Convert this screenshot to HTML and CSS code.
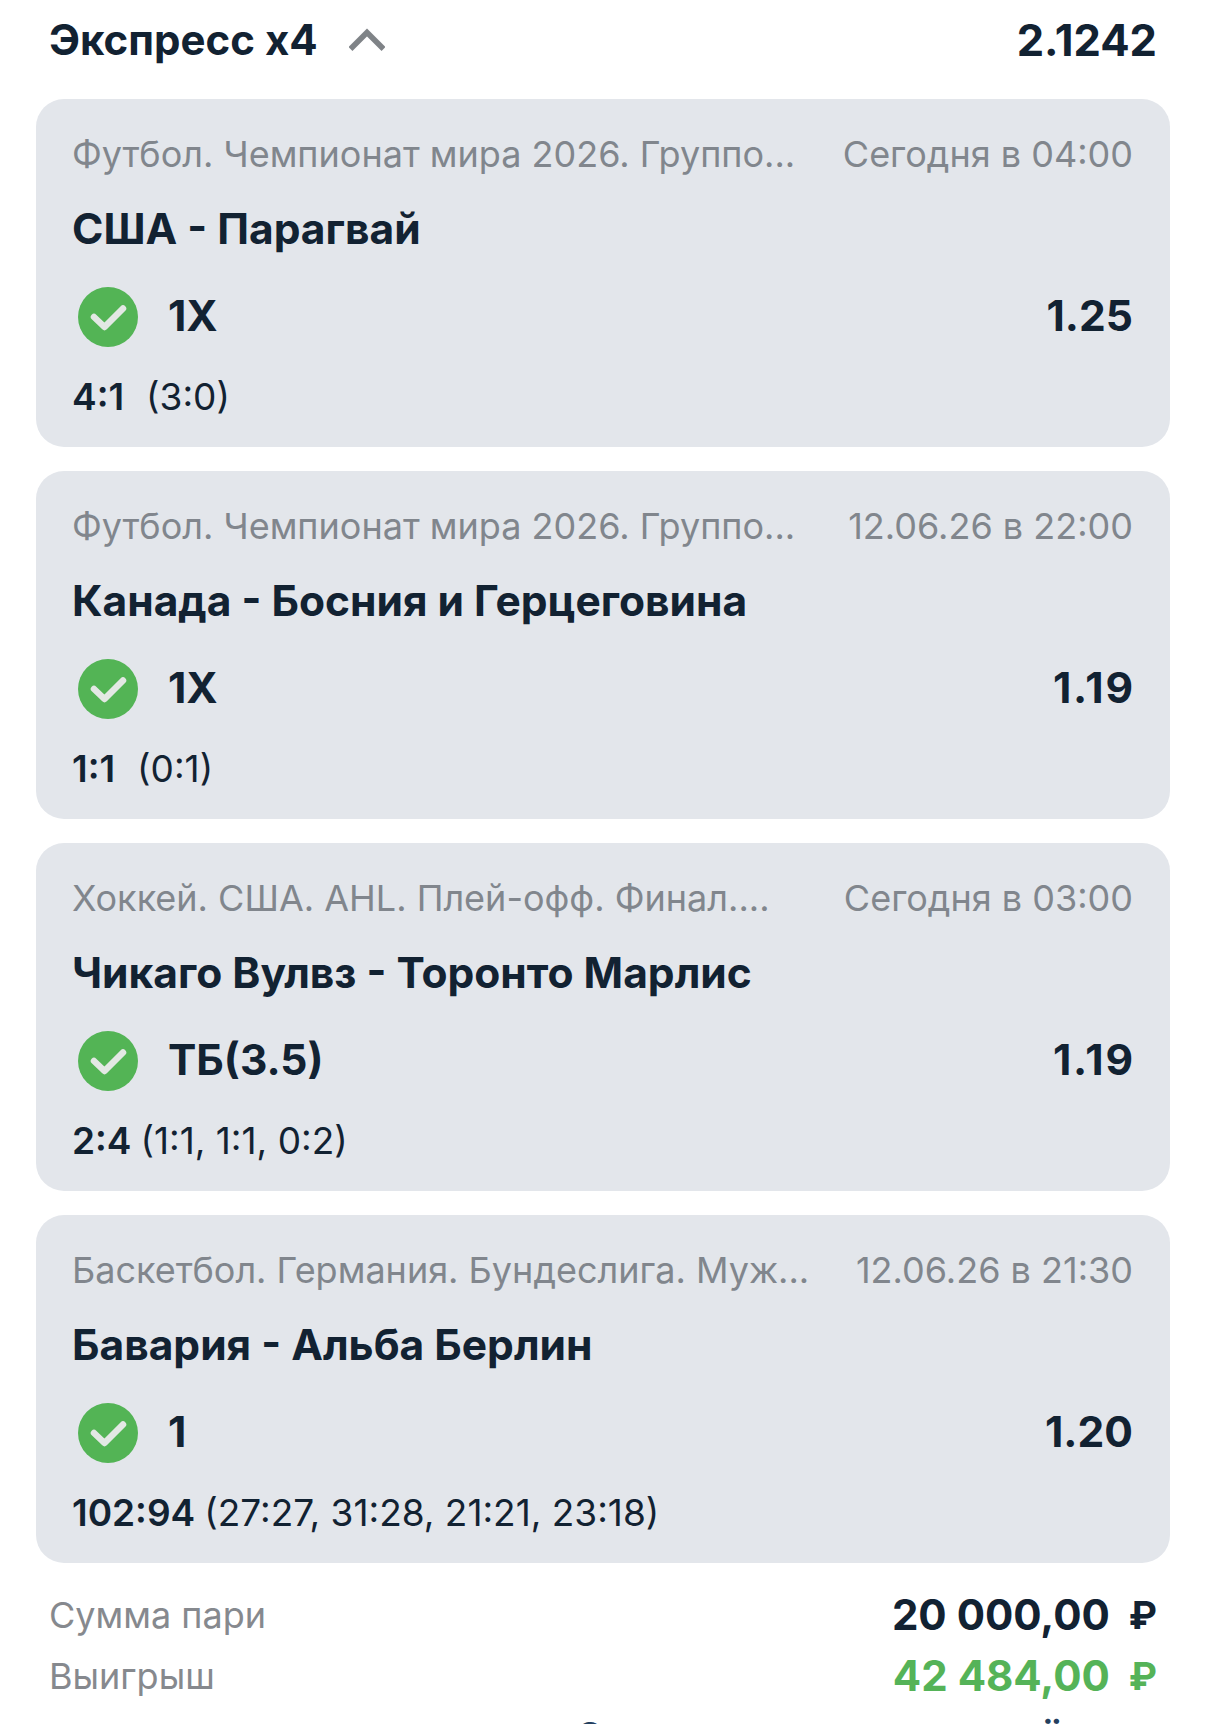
FILE: index.html
```html
<!DOCTYPE html>
<html lang="ru">
<head>
<meta charset="utf-8">
<title>Экспресс x4</title>
<link rel="stylesheet" href="styles.css">
</head>
<body>
<main class="page">
  <header class="head">
    <div class="head-left">
      <span class="head-title">Экспресс x4</span>
      <svg class="chev" viewBox="0 0 36 24" width="36" height="24"><path d="M1.5 21 L18 4.5 L34.5 21" fill="none" stroke="#7f8387" stroke-width="5.5"/></svg>
    </div>
    <span class="head-odd">2.1242</span>
  </header>

  <section class="card">
    <div class="meta"><span class="league">Футбол. Чемпионат мира 2026. Группо...</span><span>Сегодня в 04:00</span></div>
    <div class="teams">США - Парагвай</div>
    <div class="pick">
      <svg class="ok" viewBox="0 0 60 60" width="60" height="60"><circle cx="30" cy="30" r="30" fill="#53b455"/><path d="M16 30 L26.5 40 L45 21.5" fill="none" stroke="#e3e8e4" stroke-width="6.5" stroke-linecap="round" stroke-linejoin="round"/></svg>
      <span class="pick-name">1X</span><span class="odd">1.25</span>
    </div>
    <div class="score"><b>4:1</b><span class="s-gap">(3:0)</span></div>
  </section>

  <section class="card">
    <div class="meta"><span class="league">Футбол. Чемпионат мира 2026. Группо...</span><span>12.06.26 в 22:00</span></div>
    <div class="teams">Канада - Босния и Герцеговина</div>
    <div class="pick">
      <svg class="ok" viewBox="0 0 60 60" width="60" height="60"><circle cx="30" cy="30" r="30" fill="#53b455"/><path d="M16 30 L26.5 40 L45 21.5" fill="none" stroke="#e3e8e4" stroke-width="6.5" stroke-linecap="round" stroke-linejoin="round"/></svg>
      <span class="pick-name">1X</span><span class="odd odd-wide">1.19</span>
    </div>
    <div class="score"><b>1:1</b><span class="s-gap">(0:1)</span></div>
  </section>

  <section class="card">
    <div class="meta"><span class="league">Хоккей. США. AHL. Плей-офф. Финал....</span><span>Сегодня в 03:00</span></div>
    <div class="teams">Чикаго Вулвз - Торонто Марлис</div>
    <div class="pick">
      <svg class="ok" viewBox="0 0 60 60" width="60" height="60"><circle cx="30" cy="30" r="30" fill="#53b455"/><path d="M16 30 L26.5 40 L45 21.5" fill="none" stroke="#e3e8e4" stroke-width="6.5" stroke-linecap="round" stroke-linejoin="round"/></svg>
      <span class="pick-name">ТБ(3.5)</span><span class="odd odd-wide">1.19</span>
    </div>
    <div class="score"><b>2:4</b><span>(1:1, 1:1, 0:2)</span></div>
  </section>

  <section class="card card-last">
    <div class="meta"><span class="league">Баскетбол. Германия. Бундеслига. Муж...</span><span>12.06.26 в 21:30</span></div>
    <div class="teams">Бавария - Альба Берлин</div>
    <div class="pick">
      <svg class="ok" viewBox="0 0 60 60" width="60" height="60"><circle cx="30" cy="30" r="30" fill="#53b455"/><path d="M16 30 L26.5 40 L45 21.5" fill="none" stroke="#e3e8e4" stroke-width="6.5" stroke-linecap="round" stroke-linejoin="round"/></svg>
      <span class="pick-name">1</span><span class="odd">1.20</span>
    </div>
    <div class="score"><b>102:94</b><span>(27:27, 31:28, 21:21, 23:18)</span></div>
  </section>

  <div class="row">
    <span class="label">Сумма пари</span>
    <span class="amount">20 000,00<span class="cur">₽</span></span>
  </div>
  <div class="row">
    <span class="label">Выигрыш</span>
    <span class="amount win">42 484,00<span class="cur">₽</span></span>
  </div>
  <div class="tail"><span class="tail-a">С</span><span class="tail-b">ё</span></div>
</main>
</body>
</html>
```
FILE: styles.css
```css
* { box-sizing: border-box; }
html, body { margin: 0; padding: 0; background: #fff; }
body { width: 1206px; height: 1724px; overflow: hidden; font-family: Inter, "Noto Sans", sans-serif; color: #122232; }
.page { padding: 0 36px; }
.head { height: 99px; padding: 0 13px; display: flex; justify-content: space-between; align-items: flex-start; }
.head-left { display: flex; align-items: center; gap: 31px; }
.head-title { font-size: 42px; line-height: 80px; font-weight: 700; }
.head-odd { font-size: 43.5px; line-height: 80px; font-weight: 700; }
.card { height: 348px; margin-bottom: 24px; background: #e3e6eb; border-radius: 28px; padding: 0 37px 0 36px; display: flex; flex-direction: column; }
.card-last { margin-bottom: 21px; }
.meta { height: 110px; padding-top: 30px; display: flex; justify-content: space-between; font-size: 36px; line-height: 50px; color: #81868d; font-weight: 400; }
.league { white-space: nowrap; }
.teams { font-size: 42.5px; line-height: 50px; height: 69px; font-weight: 700; margin-top: -5px; }
.pick { height: 84px; display: flex; align-items: center; font-size: 42.5px; font-weight: 700; padding-left: 6px; }
.ok { margin-top: 4px; }
.pick-name { margin-left: 30px; }
.odd { margin-left: auto; }
.odd-wide { letter-spacing: 1.8px; margin-right: -1.8px; }
.score { margin-top: 15px; font-size: 37px; line-height: 50px; display: flex; gap: 9px; }
.score b { font-weight: 600; }
.s-gap { margin-left: 13px; }
.row { display: flex; justify-content: space-between; align-items: center; height: 61px; padding: 0 13px; }
.label { font-size: 36px; color: #86898e; }
.amount { font-size: 42px; font-weight: 700; line-height: 58px; display: flex; align-items: center; gap: 19px; }
.amount.win { color: #55b358; }
.cur { font-weight: 700; font-size: 38px; }
.tail { display: flex; justify-content: space-between; margin-top: 4px; padding: 0 106px 0 540px; line-height: 50px; color: #24405f; font-weight: 600; }
.tail-a { font-size: 36px; }
.tail-b { font-size: 40px; }
```
